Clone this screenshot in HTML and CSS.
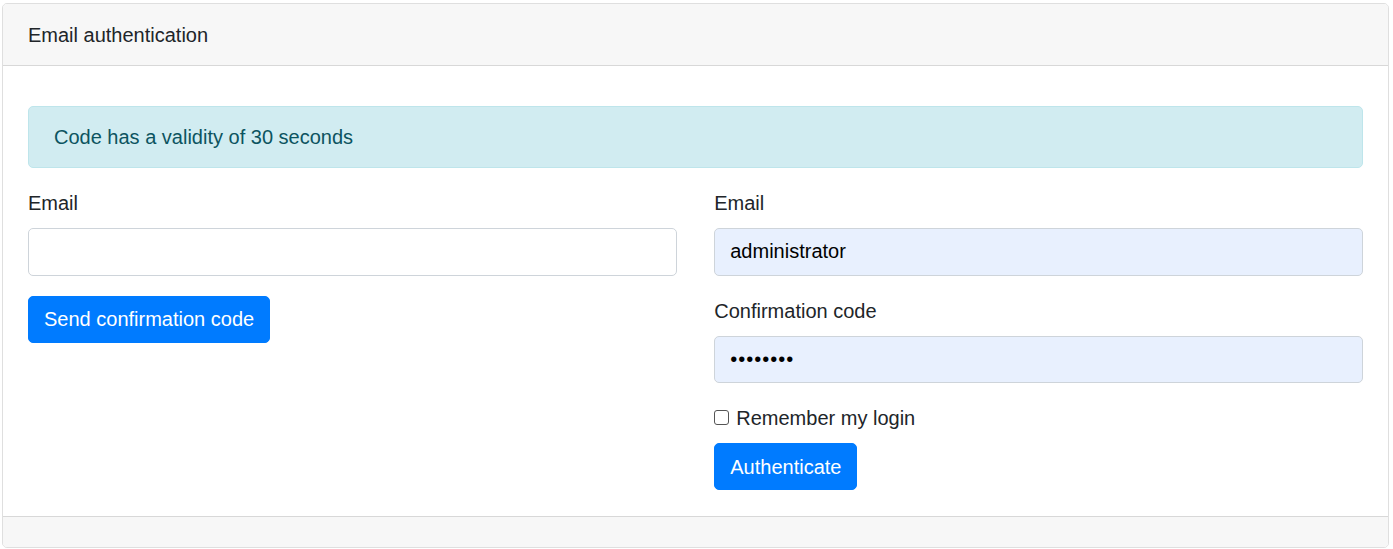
FILE: index.html
```html
<!DOCTYPE html>
<html lang="en">
<head>
<meta charset="utf-8">
<title>Email authentication</title>
<link rel="stylesheet" href="styles.css">
</head>
<body>
<div class="card">
  <div class="card-header">Email authentication</div>
  <div class="card-body">
    <div class="alert">Code has a validity of 30 seconds</div>
    <div class="row">
      <div class="col">
        <div class="form-group">
          <label class="label" for="email1">Email</label>
          <input class="form-control" id="email1" type="text">
        </div>
        <button class="btn" type="button">Send confirmation code</button>
      </div>
      <div class="col">
        <div class="form-group">
          <label class="label" for="email2">Email</label>
          <input class="form-control autofill" id="email2" type="text" value="administrator">
        </div>
        <div class="form-group">
          <label class="label" for="code">Confirmation code</label>
          <input class="form-control autofill password" id="code" type="password" value="12345678">
        </div>
        <div class="check-row">
          <input class="check" id="remember" type="checkbox">
          <label for="remember">Remember my login</label>
        </div>
        <button class="btn" type="button">Authenticate</button>
      </div>
    </div>
  </div>
  <div class="card-footer"></div>
</div>
</body>
</html>
```

FILE: styles.css
```css
* { box-sizing: border-box; }

html, body {
  margin: 0;
  background: #fff;
}

body {
  padding: 3px 4px 0 2px;
  font-family: "Liberation Sans", Arial, sans-serif;
  font-size: 20px;
  line-height: 30px;
  color: #212529;
}

.card {
  border: 1px solid rgba(0, 0, 0, 0.125);
  border-radius: 5px;
  overflow: hidden;
}

.card-header {
  padding: 16px 25px 15px;
  background: #f7f7f7;
  border-bottom: 1px solid rgba(0, 0, 0, 0.125);
}

.card-body {
  padding: 40px 25px 26px;
}

.card-footer {
  height: 31px;
  background: #f7f7f7;
  border-top: 1px solid rgba(0, 0, 0, 0.125);
}

.alert {
  padding: 15px 25px;
  margin-bottom: 20px;
  background: #d1ecf1;
  border: 1px solid #bee5eb;
  color: #0c5460;
  border-radius: 5px;
}

.row {
  display: grid;
  grid-template-columns: 1fr 1fr;
  column-gap: 37.5px;
}

.col {
  display: flex;
  flex-direction: column;
  align-items: flex-start;
}

.form-group {
  margin-bottom: 20px;
  width: 100%;
}

.label {
  display: block;
  margin-bottom: 10px;
}

.form-control {
  display: block;
  width: 100%;
  height: 47.5px;
  padding: 7.5px 15px;
  font-family: inherit;
  font-size: 20px;
  line-height: 30px;
  color: #495057;
  background: #fff;
  border: 1px solid #ced4da;
  border-radius: 5px;
  outline: none;
}

.form-control.autofill {
  background: #e8f0fe;
  color: #000;
}

.form-control.password {
  letter-spacing: 1px;
}

.btn {
  display: inline-block;
  padding: 7.5px 15px;
  font-family: inherit;
  font-size: 20px;
  line-height: 30px;
  color: #fff;
  background: #007bff;
  border: 1px solid #007bff;
  border-radius: 5px;
  cursor: pointer;
}

.check-row {
  display: flex;
  align-items: center;
  margin-bottom: 10px;
}

.check {
  appearance: none;
  -webkit-appearance: none;
  width: 15px;
  height: 15px;
  margin: 0 7px 2px 0;
  border: 1px solid #555;
  border-radius: 3px;
  background: #fff;
}
```
